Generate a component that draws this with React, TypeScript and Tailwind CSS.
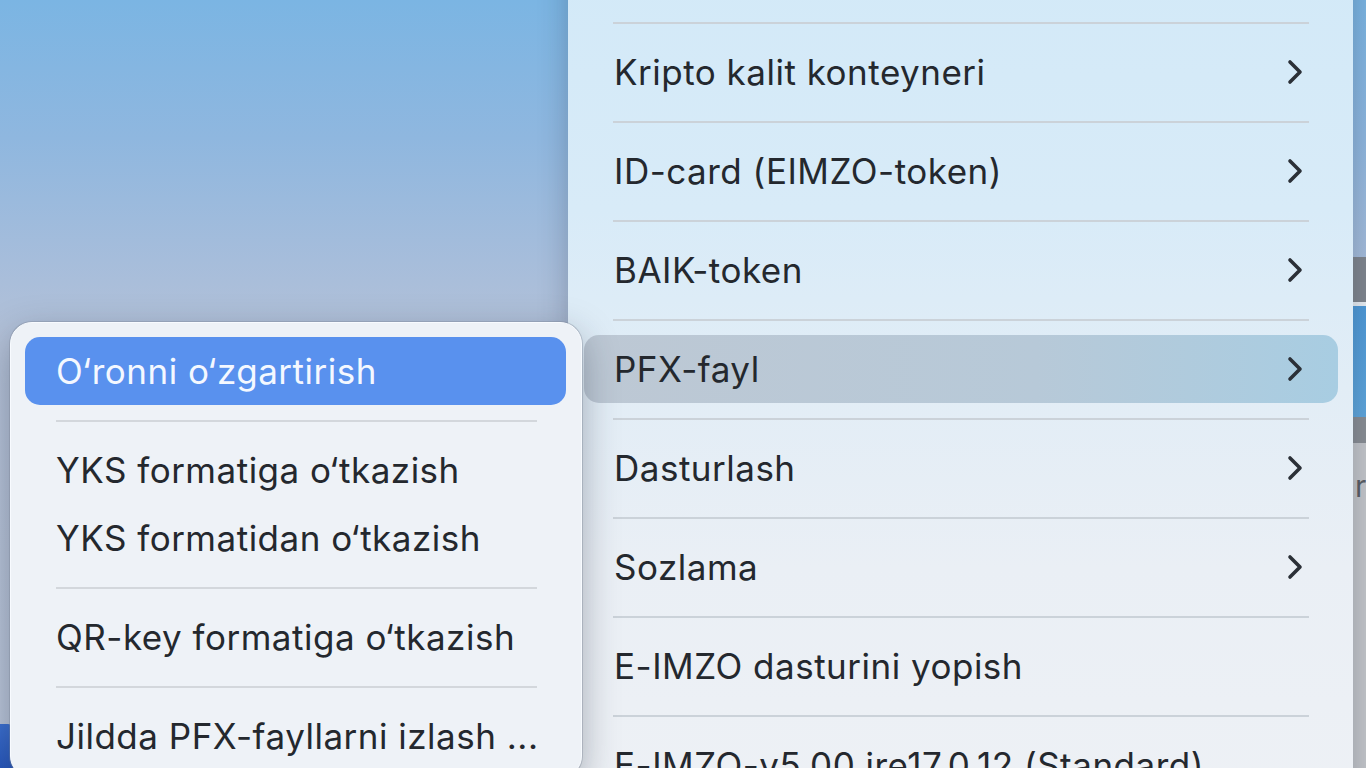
import React from "react";

const Chevron = () => (
  <svg width="18" height="26" viewBox="0 0 18 26" fill="none" className="shrink-0">
    <polyline points="4,3 14,13 4,23" stroke="#2b3037" strokeWidth="3.6" strokeLinecap="round" strokeLinejoin="round" />
  </svg>
);

const MainSep = () => (
  <div className="h-[31px] flex items-center px-[29px]">
    <div className="h-[2px] w-full bg-[#cbd2d9]" />
  </div>
);

const SubSep = () => (
  <div className="h-[31px] flex items-center pl-[31px] pr-[29px]">
    <div className="h-[2px] w-full bg-[#d3d7dc]" />
  </div>
);

function MainItem({ label, arrow = true, active = false }: { label: string; arrow?: boolean; active?: boolean }) {
  return (
    <div
      className={
        "h-[68px] flex items-center justify-between pl-[30px] pr-[34px] rounded-[15px] " +
        (active ? "bg-[linear-gradient(90deg,#bdc8d4_0%,#b7c9d8_60%,#a8cde2_100%)]" : "")
      }
    >
      <span className="whitespace-nowrap">{label}</span>
      {arrow && <Chevron />}
    </div>
  );
}

function SubItem({ label, active = false }: { label: string; active?: boolean }) {
  return (
    <div
      className={
        "h-[68px] flex items-center pl-[31px] rounded-[15px] " +
        (active ? "bg-[#5991ee] text-[#f4f8ff]" : "")
      }
    >
      <span className="whitespace-nowrap">{label}</span>
    </div>
  );
}

export default function App() {
  return (
    <div
      className="relative w-[1366px] h-[768px] overflow-hidden bg-[linear-gradient(180deg,#7bb5e3_0%,#8fb7df_18%,#a6bddb_34%,#b4c1d7_45%,#bac5d8_100%)] text-[#24282e] text-[35px] tracking-[0.5px] leading-none"
      style={{ fontFamily: "Inter, 'Noto Sans', 'Liberation Sans', sans-serif" }}
    >
      {/* background window strip on the right */}
      <div className="absolute left-[1340px] top-0 w-[40px] h-[768px] flex flex-col">
        <div className="h-[257px]" />
        <div className="h-[45px] bg-[#80868e]" />
        <div className="h-[4px] bg-[#e9eef3]" />
        <div className="h-[111px] bg-[linear-gradient(180deg,#4f9ad8,#5fa6dc)]" />
        <div className="h-[26px] bg-[#8a8e94]" />
        <div className="flex-1 bg-[#c4c6ca] pl-[15px] pt-[28px] text-[#5a5e64] text-[30px]">r</div>
      </div>

      {/* dock hint bottom-left */}
      <div className="absolute left-0 top-[724px] w-[14px] h-[50px] bg-[linear-gradient(180deg,#3b6fd0,#2453b8)] rounded-tr-[6px]" />

      {/* main menu */}
      <div className="absolute left-[568px] top-[-61px] w-[785px] h-[900px] rounded-[20px] pl-[16px] pr-[15px] bg-[linear-gradient(180deg,#d2e9f8_0%,#d8ebf8_30%,#e2edf6_50%,#eaeff5_70%,#eef1f5_100%)] shadow-[0_10px_30px_rgba(30,40,60,0.28)]">
        <MainItem label="" arrow={false} />
        <MainSep />
        <MainItem label="Kripto kalit konteyneri" />
        <MainSep />
        <MainItem label="ID-card (EIMZO-token)" />
        <MainSep />
        <MainItem label="BAIK-token" />
        <MainSep />
        <MainItem label="PFX-fayl" active />
        <MainSep />
        <MainItem label="Dasturlash" />
        <MainSep />
        <MainItem label="Sozlama" />
        <MainSep />
        <MainItem label="E-IMZO dasturini yopish" arrow={false} />
        <MainSep />
        <MainItem label="E-IMZO-v5.00 jre17.0.12 (Standard)" arrow={false} />
      </div>

      {/* submenu */}
      <div className="absolute left-[10px] top-[322px] w-[572px] h-[456px] rounded-[22px] p-[14px] pr-[15px] bg-[#eef2f7] border border-[#f8fbff] shadow-[0_0_0_1px_rgba(120,130,145,0.35),0_12px_36px_rgba(30,40,60,0.35)]">
        <SubItem label="O‘ronni o‘zgartirish" active />
        <SubSep />
        <SubItem label="YKS formatiga o‘tkazish" />
        <SubItem label="YKS formatidan o‘tkazish" />
        <SubSep />
        <SubItem label="QR-key formatiga o‘tkazish" />
        <SubSep />
        <SubItem label="Jildda PFX-fayllarni izlash ..." />
      </div>
    </div>
  );
}
